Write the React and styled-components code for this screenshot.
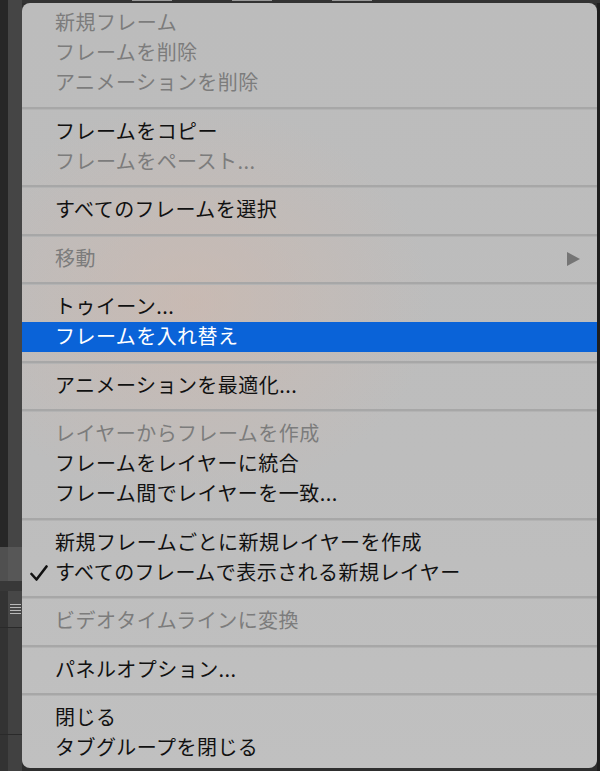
import React from "react";
import styled, { createGlobalStyle } from "styled-components";

const GlobalStyle = createGlobalStyle`
  html, body {
    margin: 0;
    padding: 0;
    background: #2c2c2c;
  }
  body {
    font-family: "Noto Sans CJK JP", "Liberation Sans", sans-serif;
  }
`;

const Page = styled.div`
  display: flex;
  width: 600px;
  height: 771px;
  overflow: hidden;
  background: #2e2e2e;
`;

const Gutter = styled.div`
  display: flex;
  flex-direction: column;
  width: 22px;
  flex-shrink: 0;
`;

const GutterBand = styled.div`
  display: flex;
  height: ${(p) => p.h}px;
  flex: ${(p) => (p.grow ? 1 : "none")};
  border-bottom: ${(p) => (p.line ? "1px solid #2a2a2a" : "none")};
`;

const GutterCell = styled.div`
  width: ${(p) => p.w}px;
  flex: ${(p) => (p.grow ? 1 : "none")};
  background: ${(p) => p.bg};
  display: flex;
  align-items: center;
  justify-content: center;
`;

const Grip = styled.div`
  width: 11px;
  display: flex;
  flex-direction: column;
  gap: 2px;
  span {
    height: 1px;
    background: #b8b8b8;
  }
`;

const Right = styled.div`
  flex: 1;
  display: flex;
  flex-direction: column;
`;

const TopStrip = styled.div`
  height: 3px;
  flex-shrink: 0;
  background: #333;
  display: flex;
  gap: 60px;
  padding-left: 110px;
  span {
    width: 40px;
    height: 1px;
    background: #9a9a9a;
  }
`;

const MenuRow = styled.div`
  display: flex;
  flex: 1;
`;

const Menu = styled.div`
  width: 575px;
  height: 765px;
  box-sizing: border-box;
  padding: 5px 0;
  border-radius: 8px;
  background:
    radial-gradient(ellipse 240px 200px at 170px 300px, rgba(208, 184, 172, 0.6), rgba(208, 184, 172, 0) 100%),
    linear-gradient(180deg, #bcbcbc 0%, #bdbdbd 60%, #c0c0c0 100%);
  overflow: hidden;
`;

const RightEdge = styled.div`
  flex: 1;
  background: #1e1e1e;
`;

const Item = styled.div`
  display: flex;
  align-items: center;
  height: 30px;
  padding: 0 17px 0 8px;
  font-size: 20px;
  letter-spacing: 0.45px;
  line-height: 30px;
  white-space: nowrap;
  color: ${(p) => (p.active ? "#ffffff" : p.disabled ? "#7c7c7c" : "#111111")};
  background: ${(p) => (p.active ? "#0a63d8" : "transparent")};
`;

const Check = styled.span`
  width: 25px;
  flex-shrink: 0;
  display: flex;
  align-items: center;
  svg {
    display: block;
  }
`;

const Label = styled.span`
  flex: 1;
  position: relative;
  top: -1px;
`;

const Arrow = styled.span`
  width: 0;
  height: 0;
  border-top: 7px solid transparent;
  border-bottom: 7px solid transparent;
  border-left: 13px solid #757575;
`;

const Separator = styled.div`
  height: 2px;
  margin: 8.5px 0 7px;
  background: #a7a7a7;
  border-bottom: 1px solid #b3b3b3;
`;

const groups = [
  [
    { label: "新規フレーム", disabled: true },
    { label: "フレームを削除", disabled: true },
    { label: "アニメーションを削除", disabled: true },
  ],
  [
    { label: "フレームをコピー" },
    { label: "フレームをペースト...", disabled: true },
  ],
  [{ label: "すべてのフレームを選択" }],
  [{ label: "移動", disabled: true, submenu: true }],
  [
    { label: "トゥイーン..." },
    { label: "フレームを入れ替え", active: true },
  ],
  [{ label: "アニメーションを最適化..." }],
  [
    { label: "レイヤーからフレームを作成", disabled: true },
    { label: "フレームをレイヤーに統合" },
    { label: "フレーム間でレイヤーを一致..." },
  ],
  [
    { label: "新規フレームごとに新規レイヤーを作成" },
    { label: "すべてのフレームで表示される新規レイヤー", checked: true },
  ],
  [{ label: "ビデオタイムラインに変換", disabled: true }],
  [{ label: "パネルオプション..." }],
  [{ label: "閉じる" }, { label: "タブグループを閉じる" }],
];

function CheckMark() {
  return (
    <svg width="18" height="16" viewBox="0 0 18 16">
      <path
        d="M1.5 9 L6.5 14.5 L16.5 1.5"
        fill="none"
        stroke="#111"
        strokeWidth="2.6"
        strokeLinecap="round"
        strokeLinejoin="round"
      />
    </svg>
  );
}

export default function App() {
  return (
    <>
      <GlobalStyle />
      <Page>
        <Gutter>
          <GutterBand h={547}>
            <GutterCell w={8} bg="#272727" />
            <GutterCell grow bg="#454545" />
          </GutterBand>
          <GutterBand h={34}>
            <GutterCell w={8} bg="#505050" />
            <GutterCell grow bg="#575757" />
          </GutterBand>
          <GutterBand h={10}>
            <GutterCell grow bg="#383838" />
          </GutterBand>
          <GutterBand h={36} line>
            <GutterCell w={8} bg="#333" />
            <GutterCell grow bg="#474747">
              <Grip>
                <span />
                <span />
                <span />
                <span />
              </Grip>
            </GutterCell>
          </GutterBand>
          <GutterBand h={106} line>
            <GutterCell w={8} bg="#333" />
            <GutterCell grow bg="#414141" />
          </GutterBand>
          <GutterBand grow>
            <GutterCell w={8} bg="#333" />
            <GutterCell grow bg="#414141" />
          </GutterBand>
        </Gutter>
        <Right>
          <TopStrip>
            <span />
            <span />
            <span />
          </TopStrip>
          <MenuRow>
            <Menu>
              {groups.map((group, gi) => (
                <React.Fragment key={gi}>
                  {gi > 0 && <Separator />}
                  {group.map((item) => (
                    <Item
                      key={item.label}
                      disabled={item.disabled}
                      active={item.active}
                    >
                      <Check>{item.checked && <CheckMark />}</Check>
                      <Label>{item.label}</Label>
                      {item.submenu && <Arrow />}
                    </Item>
                  ))}
                </React.Fragment>
              ))}
            </Menu>
            <RightEdge />
          </MenuRow>
        </Right>
      </Page>
    </>
  );
}
